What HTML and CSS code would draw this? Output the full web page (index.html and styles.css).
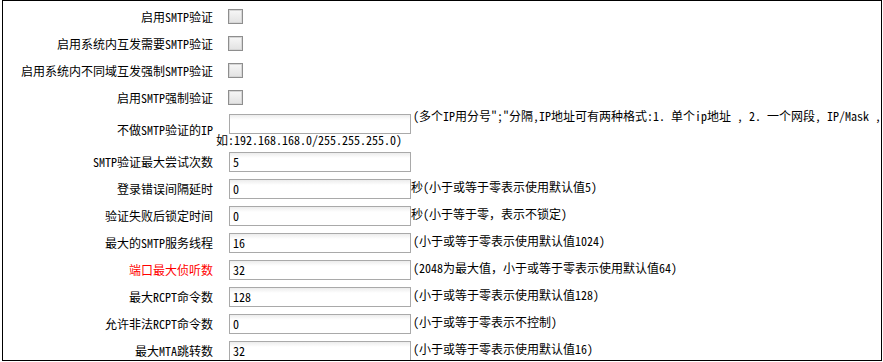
FILE: index.html
```html
<!DOCTYPE html>
<html lang="zh-CN">
<head>
  <meta charset="UTF-8">
  <title>SMTP设置</title>
  <link rel="stylesheet" href="styles.css">
</head>
<body>
  <div class="box">
    <div class="form">
      <!-- 复选项 -->
      <div class="row">
        <label class="name">启用SMTP验证</label>
        <div class="field"><input type="checkbox" class="check"></div>
      </div>
      <div class="row">
        <label class="name">启用系统内互发需要SMTP验证</label>
        <div class="field"><input type="checkbox" class="check"></div>
      </div>
      <div class="row">
        <label class="name">启用系统内不同域互发强制SMTP验证</label>
        <div class="field"><input type="checkbox" class="check"></div>
      </div>
      <div class="row">
        <label class="name">启用SMTP强制验证</label>
        <div class="field"><input type="checkbox" class="check"></div>
      </div>

      <!-- IP 白名单 -->
      <div class="row tall">
        <label class="name">不做SMTP验证的IP</label>
        <div class="field">
          <div class="line1">
            <input type="text" class="text">
            <span class="desc">(多个IP用分号";"分隔,IP地址可有两种格式:1. 单个ip地址 , 2. 一个网段, IP/Mask ,</span>
          </div>
          <div class="line2">如:192.168.168.0/255.255.255.0)</div>
        </div>
      </div>

      <!-- 数值项 -->
      <div class="row">
        <label class="name">SMTP验证最大尝试次数</label>
        <div class="field"><input type="text" class="text" value="5"></div>
      </div>
      <div class="row">
        <label class="name">登录错误间隔延时</label>
        <div class="field"><input type="text" class="text" value="0"><span class="desc unit">秒(小于或等于零表示使用默认值5)</span></div>
      </div>
      <div class="row">
        <label class="name">验证失败后锁定时间</label>
        <div class="field"><input type="text" class="text" value="0"><span class="desc unit">秒(小于等于零，表示不锁定)</span></div>
      </div>
      <div class="row">
        <label class="name">最大的SMTP服务线程</label>
        <div class="field"><input type="text" class="text" value="16"><span class="desc">(小于或等于零表示使用默认值1024)</span></div>
      </div>
      <div class="row">
        <label class="name warn">端口最大侦听数</label>
        <div class="field"><input type="text" class="text" value="32"><span class="desc">(2048为最大值，小于或等于零表示使用默认值64)</span></div>
      </div>
      <div class="row">
        <label class="name">最大RCPT命令数</label>
        <div class="field"><input type="text" class="text" value="128"><span class="desc">(小于或等于零表示使用默认值128)</span></div>
      </div>
      <div class="row">
        <label class="name">允许非法RCPT命令数</label>
        <div class="field"><input type="text" class="text" value="0"><span class="desc">(小于或等于零表示不控制)</span></div>
      </div>
      <div class="row">
        <label class="name">最大MTA跳转数</label>
        <div class="field"><input type="text" class="text" value="32"><span class="desc">(小于或等于零表示使用默认值16)</span></div>
      </div>
    </div>
  </div>
</body>
</html>
```

FILE: styles.css
```css
/* 基础 */
* {
  margin: 0;
  padding: 0;
  box-sizing: border-box;
}

body {
  background-color: #fff;
  font-family: "Noto Sans Mono CJK SC", "Noto Sans CJK SC", "Liberation Sans", monospace;
  font-size: 12px;
  color: #000;
}

/* 外框 */
.box {
  margin-left: 2px;
  width: 880px;
  height: 361px;
  border: 1px solid #000;
  overflow: hidden;
}

.form {
  padding-top: 2px;
}

/* 行 */
.row {
  display: flex;
  align-items: center;
  height: 27px;
}

.row.tall {
  height: 37px;
  align-items: flex-start;
}

.name {
  flex: none;
  width: 210px;
  text-align: right;
  line-height: 14px;
  white-space: nowrap;
}

.row.tall .name {
  align-self: center;
}

.name.warn {
  color: #f00;
}

.field {
  display: flex;
  align-items: center;
  white-space: nowrap;
}

.row.tall .field {
  display: block;
}

/* 控件 */
.check {
  appearance: none;
  -webkit-appearance: none;
  display: block;
  width: 15px;
  height: 15px;
  margin-left: 15px;
  border: 1px solid #8e8e8e;
  box-shadow: inset 0 0 0 1px #d6d6d6;
  background: linear-gradient(#f7f7f7, #e2e2e2);
}

.text {
  width: 182px;
  height: 20px;
  margin-left: 16px;
  padding: 0 3px;
  border: 1px solid #a9a9a9;
  background: linear-gradient(#ececec, #fff 5px);
  font-family: "Noto Sans Mono CJK SC", "Liberation Sans", monospace;
  font-size: 12px;
  color: #000;
  outline: none;
}

.desc {
  margin-left: 2px;
  margin-bottom: 4px;
  line-height: 14px;
}

.desc.unit {
  margin-left: 0;
}

/* IP 说明两行 */
.line1 {
  display: flex;
  align-items: flex-start;
  height: 22px;
}

.line1 .text {
  margin-top: 3px;
}

.line1 .desc {
  margin-top: -2px;
  margin-bottom: 0;
}

.line2 {
  margin-left: 3px;
  line-height: 14px;
}
```
